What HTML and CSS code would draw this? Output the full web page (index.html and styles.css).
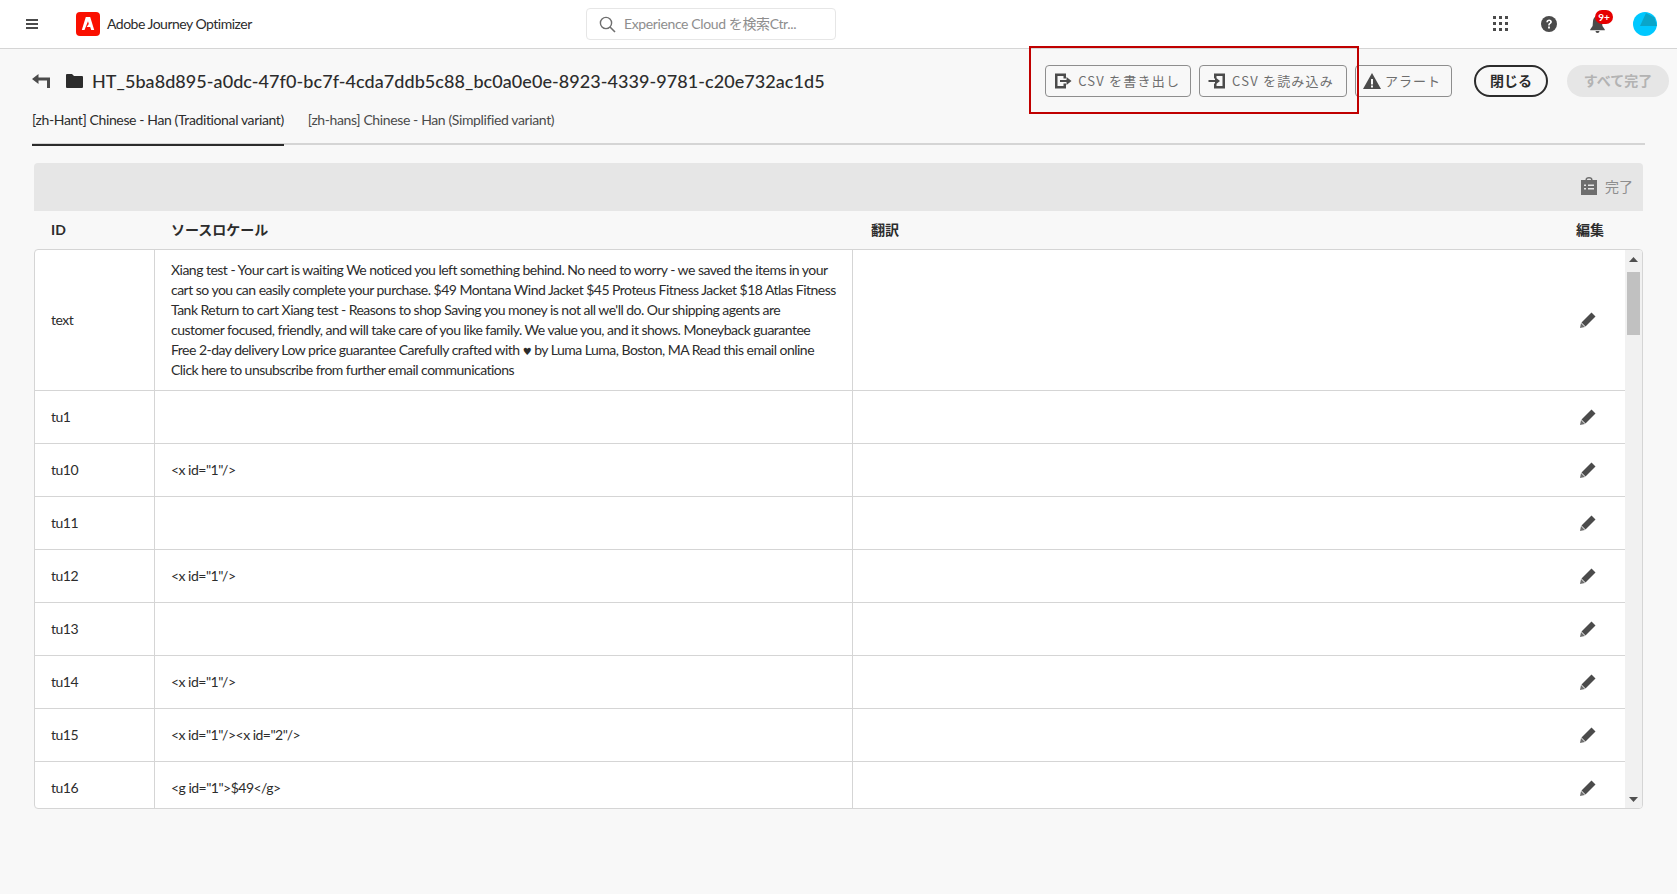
FILE: index.html
```html
<!DOCTYPE html>
<html lang="ja">
  <head>
    <meta charset="utf-8">
    <title>Adobe Journey Optimizer</title>
    <link rel="stylesheet" href="styles.css">
  </head>
  <body>
    <header class="topbar">
      <svg class="menu-icon" width="12" height="10" viewBox="0 0 12 10"><path d="M0 0h12v2H0zM0 4h12v2H0zM0 8h12v2H0z" fill="#4b4b4b"/></svg>
      <svg class="logo" width="24" height="24" viewBox="0 0 24 24"><rect width="24" height="24" rx="4" fill="#fa0f00"/><path d="M9.800 5h4.400l4 13h-3l-1-3.100h-3.600l2.200-3-.8-2.700L8.500 18H5.800z" fill="#fff"/></svg>
      <span class="product">Adobe Journey Optimizer</span>
      <div class="search">
        <svg width="17" height="17" viewBox="0 0 17 17"><circle cx="7" cy="7" r="5.600" fill="none" stroke="#6e6e6e" stroke-width="1.400"/><path d="M11 11l5 5" stroke="#6e6e6e" stroke-width="1.600"/></svg>
        <span>Experience Cloud を検索Ctr...</span>
      </div>
      <div class="top-icons">
        <svg width="16" height="16" viewBox="0 0 16 16" fill="#4b4b4b"><path d="M0 0h3v3H0zM6 0h3v3H6zM12 0h3v3h-3zM0 6h3v3H0zM6 6h3v3H6zM12 6h3v3h-3zM0 12h3v3H0zM6 12h3v3H6zM12 12h3v3h-3z"/></svg>
        <svg width="16" height="16" viewBox="0 0 16 16"><circle cx="8" cy="8" r="8" fill="#4b4b4b"/><path d="M5.300 6.200C5.400 4.500 6.500 3.500 8.200 3.500c1.600 0 2.700 1 2.700 2.300 0 1.100-.6 1.700-1.400 2.300-.6.400-.7.700-.7 1.300H7.200c0-1.100.3-1.700 1.100-2.300.5-.4.800-.7.800-1.200s-.4-.9-1-.9-1 .4-1 1.200zM7.100 10.500h1.800v2H7.100z" fill="#fff"/></svg>
        <div class="bell">
          <svg width="15" height="17" viewBox="0 0 15 17" fill="#4b4b4b"><path d="M7.500 0C10 0 11.800 2 12 5l.4 5 2.400 3.500v.7H.2v-.7L2.600 10 3 5c.2-3 2-5 4.500-5zM5.500 15h4a2 2 0 0 1-4 0z"/></svg>
          <span class="badge">9+</span>
        </div>
        <svg class="avatar" width="24" height="24" viewBox="0 0 24 24"><circle cx="12" cy="12" r="12" fill="#00c8ff"/><path d="M13 1l8.500 4.500 2.500 8.500H7z" fill="#0aa5c9"/></svg>
      </div>
    </header>

    <main class="page">
      <div class="title-row">
        <svg class="back-icon" width="18" height="14" viewBox="0 0 18 14"><path d="M6.500 0v3.500H18V14h-3V6.500H6.500V10L0 5z" fill="#4b4b4b"/></svg>
        <svg class="folder-icon" width="17" height="14" viewBox="0 0 17 14"><path d="M0 1a1 1 0 0 1 1-1h5l2 2h8a1 1 0 0 1 1 1v10a1 1 0 0 1-1 1H1a1 1 0 0 1-1-1z" fill="#2c2c2c"/></svg>
        <h1>HT_5ba8d895-a0dc-47f0-bc7f-4cda7ddb5c88_bc0a0e0e-8923-4339-9781-c20e732ac1d5</h1>
        <div class="actions">
          <button class="btn">
            <svg width="18" height="18" viewBox="0 0 18 18" fill="#4b4b4b"><path d="M1 1.500h11v5H9.500V4h-6v10h6v-2.500H12v5H1z"/><path d="M6 8h6.500V5l5 4-5 4v-3H6z"/></svg>
            CSV を書き出し
          </button>
          <button class="btn btn-import">
            <svg width="18" height="18" viewBox="0 0 18 18" fill="#4b4b4b"><path d="M6 1.500h11v15H6v-5h2.500V14h6V4h-6v2.500H6z"/><path d="M.5 8H7V5l5 4-5 4v-3H.5z"/></svg>
            CSV を読み込み
          </button>
          <button class="btn btn-alert">
            <svg width="18" height="18" viewBox="0 0 18 18"><path fill-rule="evenodd" d="M9 1l9 16H0zM8 7v5.500h2V7zM8 13.500V15.500h2v-2z" fill="#4b4b4b"/></svg>
            アラート
          </button>
          <button class="btn-close">閉じる</button>
          <button class="btn-done">すべて完了</button>
        </div>
      </div>

      <nav class="tabs">
        <a class="tab tab-active" href="#">[zh-Hant] Chinese - Han (Traditional variant)</a>
        <a class="tab" href="#">[zh-hans] Chinese - Han (Simplified variant)</a>
      </nav>

      <div class="toolbar">
        <svg width="16" height="18" viewBox="0 0 16 18" fill="#6e6e6e"><path fill-rule="evenodd" d="M0 3h4.500V2.500a3.500 2.500 0 0 1 7 0V3H16v15H0zM6 2.500V3h4v-.5a2 1 0 0 0-4 0zM3 7.500v1.500h2V7.500zM7 7.500v1.500h6V7.500zM3 11v1.500h2V11zM7 11v1.500h6V11z"/></svg>
        <span>完了</span>
      </div>

      <div class="table-head">
        <div class="col-id">ID</div>
        <div class="col-source">ソースロケール</div>
        <div class="col-target">翻訳</div>
        <div class="col-edit">編集</div>
      </div>

      <div class="table-card">
        <div class="rows">
          <div class="row row-tall">
            <div class="col-id">text</div>
            <div class="col-source">
              <div class="lines">
                <div>Xiang test - Your cart is waiting We noticed you left something behind. No need to worry - we saved the items in your</div>
                <div>cart so you can easily complete your purchase. $49 Montana Wind Jacket $45 Proteus Fitness Jacket $18 Atlas Fitness</div>
                <div>Tank Return to cart Xiang test - Reasons to shop Saving you money is not all we'll do. Our shipping agents are</div>
                <div>customer focused, friendly, and will take care of you like family. We value you, and it shows. Moneyback guarantee</div>
                <div>Free 2-day delivery Low price guarantee Carefully crafted with <span class="heart">♥</span> by Luma Luma, Boston, MA Read this email online</div>
                <div>Click here to unsubscribe from further email communications</div>
              </div>
            </div>
            <div class="col-target"></div>
            <div class="col-edit"><svg class="pencil" width="16" height="16" viewBox="0 0 16 16"><path d="M11.500.5l4 4-10 10-4-4z" fill="#4b4b4b"/><path d="M1 11l4 4-5 1z" fill="#6e6e6e"/></svg></div>
          </div>
          <div class="row">
            <div class="col-id">tu1</div>
            <div class="col-source"></div>
            <div class="col-target"></div>
            <div class="col-edit"><svg class="pencil" width="16" height="16" viewBox="0 0 16 16"><path d="M11.500.5l4 4-10 10-4-4z" fill="#4b4b4b"/><path d="M1 11l4 4-5 1z" fill="#6e6e6e"/></svg></div>
          </div>
          <div class="row">
            <div class="col-id">tu10</div>
            <div class="col-source">&lt;x id="1"/&gt;</div>
            <div class="col-target"></div>
            <div class="col-edit"><svg class="pencil" width="16" height="16" viewBox="0 0 16 16"><path d="M11.500.5l4 4-10 10-4-4z" fill="#4b4b4b"/><path d="M1 11l4 4-5 1z" fill="#6e6e6e"/></svg></div>
          </div>
          <div class="row">
            <div class="col-id">tu11</div>
            <div class="col-source"></div>
            <div class="col-target"></div>
            <div class="col-edit"><svg class="pencil" width="16" height="16" viewBox="0 0 16 16"><path d="M11.500.5l4 4-10 10-4-4z" fill="#4b4b4b"/><path d="M1 11l4 4-5 1z" fill="#6e6e6e"/></svg></div>
          </div>
          <div class="row">
            <div class="col-id">tu12</div>
            <div class="col-source">&lt;x id="1"/&gt;</div>
            <div class="col-target"></div>
            <div class="col-edit"><svg class="pencil" width="16" height="16" viewBox="0 0 16 16"><path d="M11.500.5l4 4-10 10-4-4z" fill="#4b4b4b"/><path d="M1 11l4 4-5 1z" fill="#6e6e6e"/></svg></div>
          </div>
          <div class="row">
            <div class="col-id">tu13</div>
            <div class="col-source"></div>
            <div class="col-target"></div>
            <div class="col-edit"><svg class="pencil" width="16" height="16" viewBox="0 0 16 16"><path d="M11.500.5l4 4-10 10-4-4z" fill="#4b4b4b"/><path d="M1 11l4 4-5 1z" fill="#6e6e6e"/></svg></div>
          </div>
          <div class="row">
            <div class="col-id">tu14</div>
            <div class="col-source">&lt;x id="1"/&gt;</div>
            <div class="col-target"></div>
            <div class="col-edit"><svg class="pencil" width="16" height="16" viewBox="0 0 16 16"><path d="M11.500.5l4 4-10 10-4-4z" fill="#4b4b4b"/><path d="M1 11l4 4-5 1z" fill="#6e6e6e"/></svg></div>
          </div>
          <div class="row">
            <div class="col-id">tu15</div>
            <div class="col-source">&lt;x id="1"/&gt;&lt;x id="2"/&gt;</div>
            <div class="col-target"></div>
            <div class="col-edit"><svg class="pencil" width="16" height="16" viewBox="0 0 16 16"><path d="M11.500.5l4 4-10 10-4-4z" fill="#4b4b4b"/><path d="M1 11l4 4-5 1z" fill="#6e6e6e"/></svg></div>
          </div>
          <div class="row">
            <div class="col-id">tu16</div>
            <div class="col-source">&lt;g id="1"&gt;$49&lt;/g&gt;</div>
            <div class="col-target"></div>
            <div class="col-edit"><svg class="pencil" width="16" height="16" viewBox="0 0 16 16"><path d="M11.500.5l4 4-10 10-4-4z" fill="#4b4b4b"/><path d="M1 11l4 4-5 1z" fill="#6e6e6e"/></svg></div>
          </div>
        </div>
        <div class="scrollbar">
          <svg width="9" height="5" viewBox="0 0 9 5"><path d="M4.500 0L9 5H0z" fill="#505050"/></svg>
          <div class="scroll-thumb"></div>
          <svg class="scroll-down" width="9" height="5" viewBox="0 0 9 5"><path d="M0 0h9L4.500 5z" fill="#505050"/></svg>
        </div>
      </div>
    </main>

    <!-- red marker drawn over the CSV buttons -->
    <div class="marker"></div>
  </body>
</html>
```

FILE: styles.css
```css
* {
  box-sizing: border-box;
}
body {
  margin: 0;
  height: 894px;
  overflow: hidden;
  background: #f8f8f8;
  color: #2c2c2c;
  font-family: Lato, "Noto Sans CJK JP", sans-serif;
  font-size: 14px;
  letter-spacing: -0.38px;
}

/* Top bar */
.topbar {
  display: flex;
  align-items: center;
  height: 49px;
  padding-left: 26px;
  background: #fff;
  border-bottom: 1px solid #d5d5d5;
}
.logo {
  margin-left: 38px;
}
.product {
  width: 479px;
  margin-left: 7px;
  padding-bottom: 2px;
  letter-spacing: -0.5px;
}
.search {
  display: flex;
  align-items: center;
  gap: 8px;
  width: 250px;
  height: 32px;
  padding-left: 12px;
  border: 1px solid #e6e6e6;
  border-radius: 4px;
  color: #8e8e8e;
}
.search span {
  padding-bottom: 2px;
}
.top-icons {
  display: flex;
  align-items: center;
  margin-left: auto;
  padding-right: 20px;
}
.top-icons > svg:first-child {
  margin-right: 32px;
}
.bell {
  position: relative;
  display: flex;
  margin-left: 33px;
  margin-right: 28px;
}
.badge {
  position: absolute;
  top: -6px;
  left: 5px;
  width: 18px;
  height: 14px;
  border-radius: 7px;
  background: #e60000;
  color: #fff;
  font-size: 10px;
  font-weight: 700;
  letter-spacing: 0;
  line-height: 14px;
  text-align: center;
}

/* Title row */
.title-row {
  display: flex;
  align-items: center;
  height: 32px;
  margin-top: 16px;
  padding: 0 8px 0 32px;
}
.folder-icon {
  margin-left: 16px;
}
h1 {
  margin: 0 0 0 9px;
  font-size: 18px;
  font-weight: 500;
  letter-spacing: 0.06px;
  white-space: nowrap;
}
.actions {
  display: flex;
  align-items: center;
  margin-left: auto;
}
.btn {
  display: flex;
  align-items: center;
  gap: 6px;
  height: 32px;
  margin-right: 8px;
  padding: 0 10px 2px 8px;
  border: 1px solid #8e8e8e;
  border-radius: 4px;
  background: #f8f8f8;
  color: #6e6e6e;
  font-family: "Noto Sans CJK JP", sans-serif;
  font-size: 13px;
  letter-spacing: 1.2px;
  white-space: nowrap;
}
.btn svg {
  margin-top: 2px;
}
.btn-import {
  padding-right: 12px;
}
.btn-alert {
  gap: 4px;
  margin-right: 22px;
  padding-left: 7px;
  letter-spacing: 1px;
}
.btn-close {
  width: 74px;
  height: 32px;
  padding: 0 0 2px;
  border: 2px solid #2c2c2c;
  border-radius: 16px;
  background: #f8f8f8;
  color: #2c2c2c;
  font-family: "Noto Sans CJK JP", sans-serif;
  font-size: 14px;
  font-weight: 700;
}
.btn-done {
  width: 102px;
  height: 32px;
  margin-left: 19px;
  padding: 0 0 2px;
  border: none;
  border-radius: 16px;
  background: #e6e6e6;
  color: #b3b3b3;
  font-family: "Noto Sans CJK JP", sans-serif;
  font-size: 14px;
  font-weight: 700;
}

/* Tabs */
.tabs {
  display: flex;
  gap: 24px;
  height: 48px;
  margin: 0 32px;
  padding-top: 1px;
  border-bottom: 2px solid #d5d5d5;
}
.tab {
  height: 48px;
  padding-top: 12px;
  color: #4b4b4b;
  line-height: 20px;
  text-decoration: none;
}
.tab-active {
  border-bottom: 2px solid #2c2c2c;
  color: #2c2c2c;
}

/* Toolbar and table */
.toolbar {
  display: flex;
  align-items: center;
  justify-content: flex-end;
  gap: 8px;
  height: 48px;
  margin: 18px 34px 0;
  padding: 0 10px 2px 0;
  border-radius: 4px 4px 0 0;
  background: #e6e6e6;
  color: #8e8e8e;
  letter-spacing: 0;
}
.table-head {
  display: grid;
  grid-template-columns: 120px 698px 1fr 66px;
  align-items: center;
  height: 38px;
  margin: 0 34px;
  padding: 0 1px 2px;
  font-weight: 700;
  letter-spacing: 0;
}
.table-head .col-target {
  padding-left: 18px;
}
.table-card {
  display: flex;
  height: 560px;
  margin: 0 34px;
  overflow: hidden;
  background: #fff;
  border: 1px solid #d5d5d5;
  border-radius: 4px;
}
.rows {
  flex: 1;
  overflow: hidden;
}
.row {
  display: grid;
  grid-template-columns: 120px 698px 1fr 45px;
  height: 53px;
  border-bottom: 1px solid #d5d5d5;
  line-height: 20px;
  letter-spacing: -0.52px;
}
.row-tall {
  height: 141px;
}
.col-id,
.col-source {
  display: flex;
  align-items: center;
  padding: 0 16px;
}
.row .col-id,
.row .col-source {
  border-right: 1px solid #d5d5d5;
}
.lines {
  white-space: nowrap;
}
.heart {
  font-family: "DejaVu Sans", sans-serif;
  font-size: 10px;
  line-height: 1;
}
.pencil {
  display: block;
}
.row .col-edit {
  display: flex;
  align-items: center;
}
.scrollbar {
  display: flex;
  flex-direction: column;
  align-items: center;
  width: 17px;
  padding-top: 7px;
  background: #f1f1f1;
}
.scroll-thumb {
  width: 13px;
  height: 63px;
  margin-top: 10px;
  background: #c1c1c1;
}
.scroll-down {
  margin-top: auto;
  margin-bottom: 6px;
}

/* Red marker */
.marker {
  position: absolute;
  top: 46px;
  left: 1029px;
  width: 330px;
  height: 68px;
  border: 2px solid #c00000;
}
```
